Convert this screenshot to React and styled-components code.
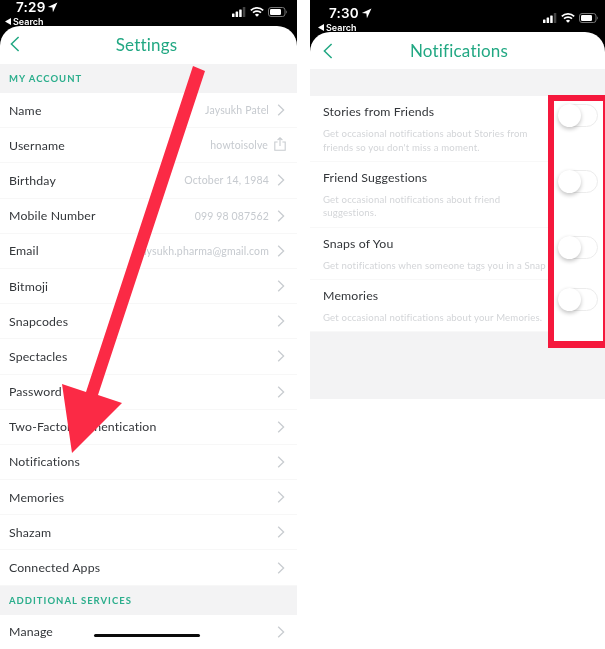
import React from "react";
import styled, { createGlobalStyle } from "styled-components";

const Global = createGlobalStyle`
  html, body { margin: 0; padding: 0; background: #fff; }
  body { font-family: "Lato", "Open Sans", "Liberation Sans", sans-serif; }
`;

const Page = styled.div`
  position: relative;
  width: 605px;
  height: 649px;
  display: grid;
  grid-template-columns: 297px 295px;
  column-gap: 13px;
  overflow: hidden;
  background: #fff;
  filter: blur(0.3px);
`;

const Phone = styled.section`
  position: relative;
  height: ${(p) => p.$height}px;
  background: #000;
  display: flex;
  flex-direction: column;
  overflow: hidden;
`;

const StatusBar = styled.div`
  height: ${(p) => p.$height}px;
  flex: none;
  position: relative;
  display: flex;
  justify-content: space-between;
  align-items: flex-start;
  padding: ${(p) => p.$top}px 0 0 ${(p) => p.$left}px;
  box-sizing: border-box;
  color: #fff;
`;

const StatusLeft = styled.div`
  display: flex;
  flex-direction: column;
`;

const Clock = styled.div`
  display: flex;
  align-items: center;
  gap: 2px;
  font: 600 13.5px/14px "Inter", "Liberation Sans", sans-serif;
  letter-spacing: 0.2px;
`;

const BackLink = styled.div`
  display: flex;
  align-items: center;
  gap: 2px;
  font: 600 9px/11px "Inter", "Liberation Sans", sans-serif;
  margin: 2px 0 0 -11px;
`;

const StatusIcons = styled.div`
  display: flex;
  align-items: center;
  gap: 4px;
  margin: 7px ${(p) => p.$right}px 0 0;
`;

const Card = styled.div`
  flex: 1;
  min-height: 0;
  background: #fff;
  border-radius: 20px 20px 0 0;
  display: flex;
  flex-direction: column;
  overflow: hidden;
`;

const Header = styled.header`
  flex: none;
  height: ${(p) => p.$height}px;
  display: flex;
  align-items: center;
  padding: 0 ${(p) => p.$right}px ${(p) => p.$bottom}px ${(p) => p.$left}px;
  box-sizing: border-box;
`;

const BackIcon = styled.svg`
  flex: none;
  width: 10px;
  height: 16px;
`;

const Title = styled.h1`
  flex: 1;
  margin: 0;
  text-align: center;
  font-size: 17px;
  font-weight: 400;
  letter-spacing: 0.2px;
  color: #22a883;
`;

const SectionLabel = styled.div`
  flex: none;
  height: 29px;
  background: #f3f3f4;
  display: flex;
  align-items: center;
  padding-left: 9px;
  font-size: 9.5px;
  font-weight: 700;
  letter-spacing: 1px;
  color: #2bae8c;
`;

const SettingsRow = styled.div`
  flex: none;
  height: 35.2px;
  box-sizing: border-box;
  display: flex;
  align-items: center;
  padding: 0 11px 0 9px;
  border-bottom: 1px solid #f7f7f7;
  font-size: 12.3px;
  letter-spacing: 0.15px;
  color: #33363a;
`;

const RowLabel = styled.span`
  flex: 1;
`;

const RowValue = styled.span`
  font-size: 10.5px;
  letter-spacing: 0.15px;
  color: #c6cacf;
  margin-right: 8px;
`;

const Chevron = styled.svg`
  flex: none;
  width: 8px;
  height: 12px;
  margin-right: 1px;
`;

const ShareIcon = styled.svg`
  flex: none;
  width: 12px;
  height: 14px;
  margin: -2px 0 0 -2px;
`;

const Spacer = styled.div`
  flex: none;
  height: ${(p) => p.$height}px;
  background: #f3f3f4;
`;

const NotificationRow = styled.div`
  flex: none;
  box-sizing: border-box;
  display: flex;
  justify-content: space-between;
  align-items: flex-start;
  padding: 8px 7px 6.8px 13px;
  border-bottom: 1px solid #f8f8f8;
`;

const RowTitle = styled.div`
  font-size: 12.3px;
  line-height: 16px;
  letter-spacing: 0.15px;
  color: #33363a;
`;

const RowDescription = styled.div`
  margin-top: 7px;
  font-size: 9.6px;
  line-height: 13.5px;
  letter-spacing: 0.17px;
  color: #d3d5d8;
  white-space: pre;
`;

const Toggle = styled.div`
  position: relative;
  z-index: 2;
  flex: none;
  width: 40px;
  height: 23px;
  box-sizing: border-box;
  border: 1px solid #ececec;
  border-radius: 12px;
  background: #fff;
  &::before {
    content: "";
    position: absolute;
    left: -1px;
    top: -1px;
    width: 23px;
    height: 23px;
    border-radius: 50%;
    background: #fff;
    box-shadow: 0 2px 4px rgba(0, 0, 0, 0.24);
  }
`;

const Highlight = styled.div`
  position: absolute;
  z-index: 1;
  left: 238px;
  top: 95px;
  width: 57px;
  height: 253px;
  box-sizing: border-box;
  border: solid #f5183c;
  border-width: 6px 2px 7px 6px;
  background: #fff;
`;

const Arrow = styled.svg`
  position: absolute;
  left: 0;
  top: 0;
  width: 297px;
  height: 649px;
  z-index: 3;
  pointer-events: none;
`;

const HomeBar = styled.div`
  position: absolute;
  z-index: 3;
  left: 94px;
  top: 634px;
  width: 106px;
  height: 3px;
  border-radius: 2px;
  background: #0a0a0a;
`;

const LocationGlyph = () => (
  <svg width="11" height="11" viewBox="0 0 10 10" aria-hidden="true">
    <path d="M9.5 0.5 L0.8 4.6 L4.9 5.1 L5.4 9.4 Z" fill="#fff" />
  </svg>
);

const BackGlyph = () => (
  <svg width="6" height="7" viewBox="0 0 6 7" aria-hidden="true">
    <path d="M6 0 L0 3.5 L6 7 Z" fill="#fff" />
  </svg>
);

const Signal = () => (
  <svg width="14" height="10" viewBox="0 0 14 10" aria-hidden="true">
    <rect x="0" y="6.5" width="2.5" height="3.5" rx="0.5" fill="#fff" />
    <rect x="3.6" y="4.5" width="2.5" height="5.5" rx="0.5" fill="#fff" />
    <rect x="7.2" y="2.5" width="2.5" height="7.5" rx="0.5" fill="#fff" />
    <rect x="10.8" y="0" width="2.5" height="10" rx="0.5" fill="#444" />
  </svg>
);

const Wifi = () => (
  <svg width="14" height="10" viewBox="0 0 14 10" fill="none" aria-hidden="true">
    <path d="M0.8 3.4 A9 9 0 0 1 13.2 3.4" stroke="#fff" strokeWidth="1.7" />
    <path d="M3 5.7 A5.8 5.8 0 0 1 11 5.7" stroke="#fff" strokeWidth="1.7" />
    <path d="M7 9.8 L4.9 7.7 A3 3 0 0 1 9.1 7.7 Z" fill="#fff" />
  </svg>
);

const Battery = () => (
  <svg width="20" height="10" viewBox="0 0 20 10" fill="none" aria-hidden="true">
    <rect x="0.5" y="0.5" width="16.5" height="9" rx="2.5" stroke="#777" />
    <rect x="2" y="2" width="11" height="6" rx="1.3" fill="#fff" />
    <path d="M18.2 3.4 C19.2 3.8 19.2 6.2 18.2 6.6 Z" fill="#777" />
  </svg>
);

const Status = ({ time, height, top, left, right }) => (
  <StatusBar $height={height} $top={top} $left={left}>
    <StatusLeft>
      <Clock>
        {time}
        <LocationGlyph />
      </Clock>
      <BackLink>
        <BackGlyph />
        Search
      </BackLink>
    </StatusLeft>
    <StatusIcons $right={right}>
      <Signal />
      <Wifi />
      <Battery />
    </StatusIcons>
  </StatusBar>
);

const Back = () => (
  <BackIcon viewBox="0 0 10 16" fill="none" aria-hidden="true">
    <path d="M8.6 1 L1.4 8 L8.6 15" stroke="#22a883" strokeWidth="1.5" />
  </BackIcon>
);

const RowChevron = () => (
  <Chevron viewBox="0 0 8 12" fill="none" aria-hidden="true">
    <path d="M1.2 0.8 L6.6 6 L1.2 11.2" stroke="#c8ccd0" strokeWidth="1.3" />
  </Chevron>
);

const Share = () => (
  <ShareIcon viewBox="0 0 12 14" fill="none" aria-hidden="true">
    <path
      d="M3.6 5 H0.8 V13.2 H11.2 V5 H8.4 M6 9 V0.8 M3.6 3 L6 0.8 L8.4 3"
      stroke="#c8ccd0"
      strokeWidth="1.1"
    />
  </ShareIcon>
);

const accountRows = [
  ["Name", "Jaysukh Patel"],
  ["Username", "howtoisolve", "share"],
  ["Birthday", "October 14, 1984"],
  ["Mobile Number", "099 98 087562"],
  ["Email", "jaysukh.pharma@gmail.com"],
  ["Bitmoji"],
  ["Snapcodes"],
  ["Spectacles"],
  ["Password"],
  ["Two-Factor Authentication"],
  ["Notifications"],
  ["Memories"],
  ["Shazam"],
  ["Connected Apps"],
];

const notificationRows = [
  {
    title: "Stories from Friends",
    text: "Get occasional notifications about Stories from\nfriends so you don't miss a moment.",
  },
  {
    title: "Friend Suggestions",
    text: "Get occasional notifications about friend\nsuggestions.",
  },
  {
    title: "Snaps of You",
    text: "Get notifications when someone tags you in a Snap",
  },
  {
    title: "Memories",
    text: "Get occasional notifications about your Memories.",
  },
];

const Row = ({ label, value, icon }) => (
  <SettingsRow>
    <RowLabel>{label}</RowLabel>
    {value && <RowValue>{value}</RowValue>}
    {icon === "share" ? <Share /> : <RowChevron />}
  </SettingsRow>
);

export default function App() {
  return (
    <Page>
      <Global />
      <Phone $height={649}>
        <Status time="7:29" height={26} top={0} left={16} right={9} />
        <Card>
          <Header $height={38} $left={10} $right={24} $bottom={2}>
            <Back />
            <Title>Settings</Title>
          </Header>
          <SectionLabel>MY ACCOUNT</SectionLabel>
          {accountRows.map(([label, value, icon]) => (
            <Row key={label} label={label} value={value} icon={icon} />
          ))}
          <SectionLabel>ADDITIONAL SERVICES</SectionLabel>
          <Row label="Manage" />
        </Card>
        <HomeBar />
        <Arrow viewBox="0 0 297 649" aria-hidden="true">
          <path
            d="M193 66 L205 71 L98 395 L122 403 L72 453 L62 384 L86 392 Z"
            fill="#fb2a45"
          />
        </Arrow>
      </Phone>
      <Phone $height={399}>
        <Status time="7:30" height={32} top={6} left={19} right={6} />
        <Card>
          <Header $height={37} $left={13} $right={20} $bottom={0}>
            <Back />
            <Title>Notifications</Title>
          </Header>
          <Spacer $height={27} />
          {notificationRows.map((row) => (
            <NotificationRow key={row.title}>
              <div>
                <RowTitle>{row.title}</RowTitle>
                <RowDescription>{row.text}</RowDescription>
              </div>
              <Toggle />
            </NotificationRow>
          ))}
          <Spacer $height={70} />
        </Card>
        <Highlight />
      </Phone>
    </Page>
  );
}
